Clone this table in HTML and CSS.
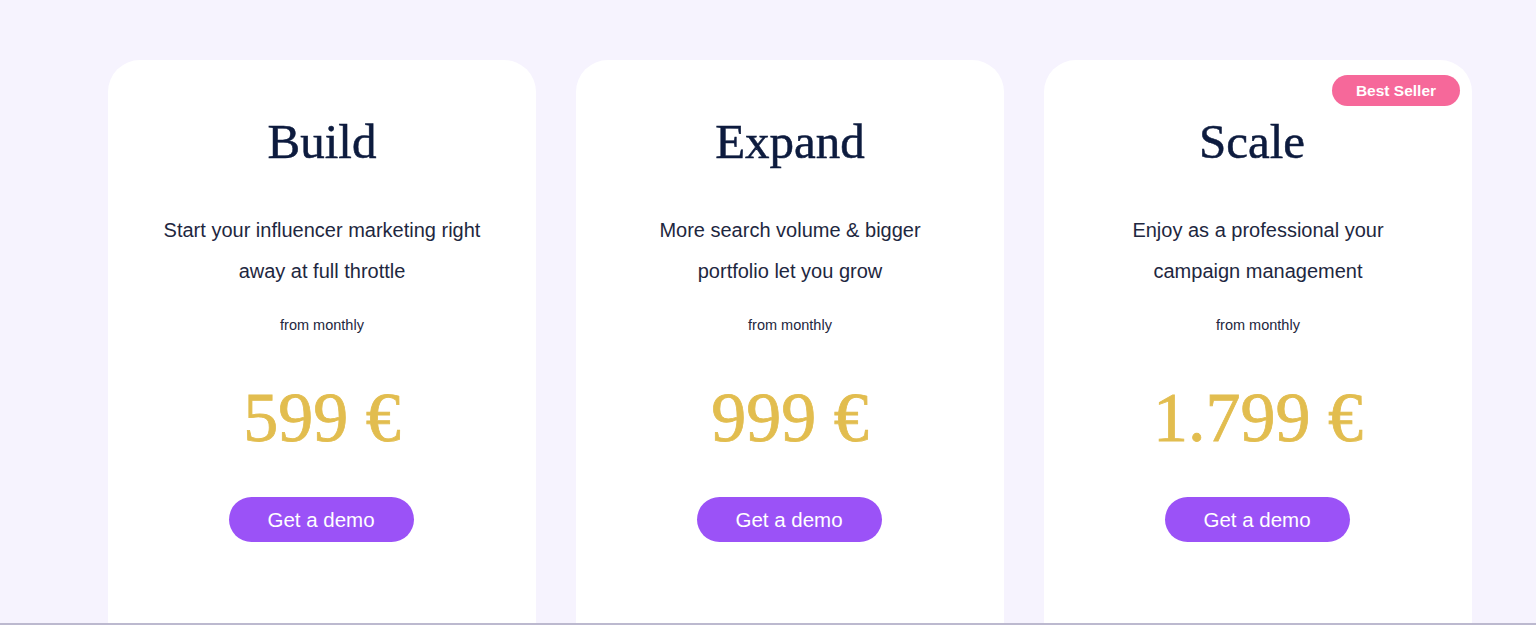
FILE: index.html
```html
<!DOCTYPE html>
<html lang="en">
<head>
<meta charset="utf-8">
<title>Pricing</title>
<link rel="stylesheet" href="styles.css">
</head>
<body>
<section class="pricing">
  <div class="cards">
    <article class="card">
      <h2 class="title">Build</h2>
      <p class="desc">Start your influencer marketing right away at full throttle</p>
      <p class="from">from monthly</p>
      <p class="price">599 €</p>
      <a class="btn" href="#">Get a demo</a>
    </article>
    <article class="card">
      <h2 class="title">Expand</h2>
      <p class="desc">More search volume &amp; bigger portfolio let you grow</p>
      <p class="from">from monthly</p>
      <p class="price">999 €</p>
      <a class="btn" href="#">Get a demo</a>
    </article>
    <article class="card card-featured">
      <span class="badge">Best Seller</span>
      <h2 class="title">Scale</h2>
      <p class="desc">Enjoy as a professional your campaign management</p>
      <p class="from">from monthly</p>
      <p class="price">1.799 €</p>
      <a class="btn" href="#">Get a demo</a>
    </article>
  </div>
</section>
</body>
</html>
```

FILE: styles.css
```css
* { box-sizing: border-box; }
html, body { margin: 0; padding: 0; }
body {
  background: #f6f3fe;
  font-family: "Liberation Sans", Arial, sans-serif;
  height: 625px;
  overflow: hidden;
}
.pricing {
  height: 625px;
  padding-top: 60px;
  border-bottom: 2px solid #bcb9cf;
  overflow: hidden;
}
.cards {
  display: flex;
  gap: 40px;
  padding-left: 108px;
}
.card {
  position: relative;
  width: 428px;
  height: 600px;
  background: #ffffff;
  border-radius: 32px;
  padding: 56px 52px 0;
  display: flex;
  flex-direction: column;
  align-items: center;
  text-align: center;
}
.title {
  margin: 0;
  font-family: "Liberation Serif", "Times New Roman", serif;
  font-weight: 400;
  font-size: 49px;
  line-height: 52px;
  color: #0d1b3e;
  -webkit-text-stroke: 0.5px #0d1b3e;
}
.card-featured .title {
  margin-right: 12px;
}
.desc {
  margin: 42px 0 0;
  font-size: 20px;
  line-height: 41px;
  color: #1e2740;
}
.from {
  margin: 23px 0 0;
  font-size: 14.5px;
  line-height: 20px;
  color: #1e2740;
}
.price {
  margin: 45px 0 0;
  font-family: "Liberation Serif", "Times New Roman", serif;
  font-size: 70px;
  line-height: 76px;
  color: #e2bd4f;
  -webkit-text-stroke: 0.8px #e2bd4f;
}
.btn {
  margin-top: 41px;
  width: 185px;
  height: 45px;
  margin-left: -2px;
  border-radius: 23px;
  background: #9b52f7;
  color: #ffffff;
  font-size: 20.5px;
  line-height: 45px;
  text-decoration: none;
}
.badge {
  position: absolute;
  top: 15px;
  right: 12px;
  width: 128px;
  height: 31px;
  border-radius: 16px;
  background: #f6689a;
  color: #ffffff;
  font-weight: 700;
  font-size: 15.5px;
  line-height: 31px;
}
```
